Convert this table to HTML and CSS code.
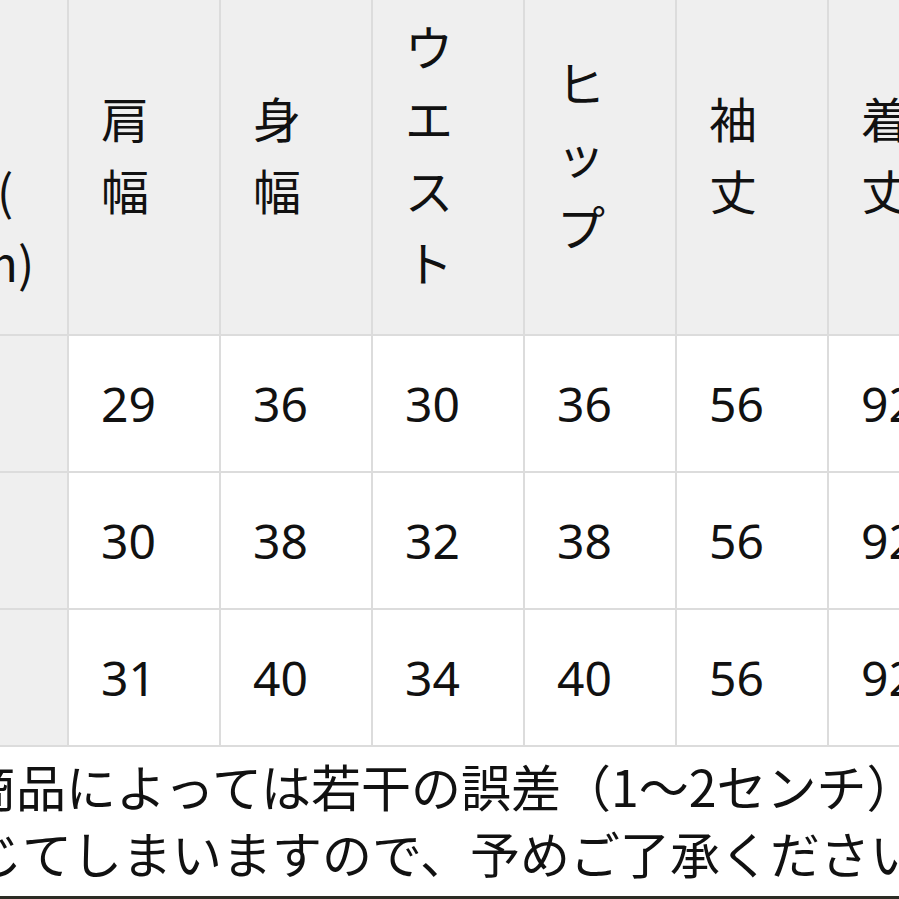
FILE: index.html
```html
<!DOCTYPE html>
<html lang="ja">
<head>
<meta charset="utf-8">
<title>サイズ表</title>
<link rel="stylesheet" href="styles.css">
</head>
<body>
<div class="page">
  <table class="size-table">
    <colgroup>
      <col class="c"><col class="c"><col class="c"><col class="c"><col class="c"><col class="c"><col class="c">
    </colgroup>
    <thead>
      <tr>
        <th class="label">サ<br>イ<br>ズ(<br>cm)</th>
        <th>肩幅</th>
        <th>身幅</th>
        <th>ウエスト</th>
        <th>ヒップ</th>
        <th>袖丈</th>
        <th>着丈</th>
      </tr>
    </thead>
    <tbody>
      <tr>
        <th class="label">S</th>
        <td>29</td><td>36</td><td>30</td><td>36</td><td>56</td><td>92</td>
      </tr>
      <tr>
        <th class="label">M</th>
        <td>30</td><td>38</td><td>32</td><td>38</td><td>56</td><td>92</td>
      </tr>
      <tr>
        <th class="label">L</th>
        <td>31</td><td>40</td><td>34</td><td>40</td><td>56</td><td>92</td>
      </tr>
    </tbody>
  </table>
  <div class="note">
    <div class="note-line first">商品によっては若干の誤差（1〜2センチ）が生</div>
    <div class="note-line second">じてしまいますので、予めご了承ください。</div>
  </div>
  <div class="bar"></div>
</div>
</body>
</html>
```
FILE: styles.css
```css
html, body {
  margin: 0;
  padding: 0;
  background: #ffffff;
}

.page {
  width: 899px;
  height: 899px;
  overflow: hidden;
  font-family: "Noto Sans", "Noto Sans CJK JP", sans-serif;
  color: #111111;
}

.size-table {
  border-collapse: collapse;
  table-layout: fixed;
  width: 1064px;
  margin-top: -19px;
  margin-left: -85px;
}

.size-table col.c {
  width: 152px;
}

.size-table th,
.size-table td {
  border: 2px solid #dcdcdc;
  padding: 31.5px 32px;
  font-size: 48px;
  line-height: 72px;
  font-weight: 400;
  text-align: left;
  vertical-align: middle;
}

.size-table thead th {
  background: #efefef;
  font-family: "Noto Sans CJK JP", sans-serif;
  padding-top: 25.5px;
  padding-bottom: 37.5px;
}

.size-table th.label {
  background: #efefef;
}

.size-table td {
  background: #ffffff;
}

.note {
  padding: 5px 0 10px;
  background: #ffffff;
  font-family: "Noto Sans CJK JP", sans-serif;
  font-size: 50px;
  line-height: 67px;
  white-space: nowrap;
}

.note-line.first {
  margin-left: -34px;
}

.note-line.second {
  margin-left: -28px;
}

.bar {
  height: 4px;
  background: #2c2c24;
}
```
